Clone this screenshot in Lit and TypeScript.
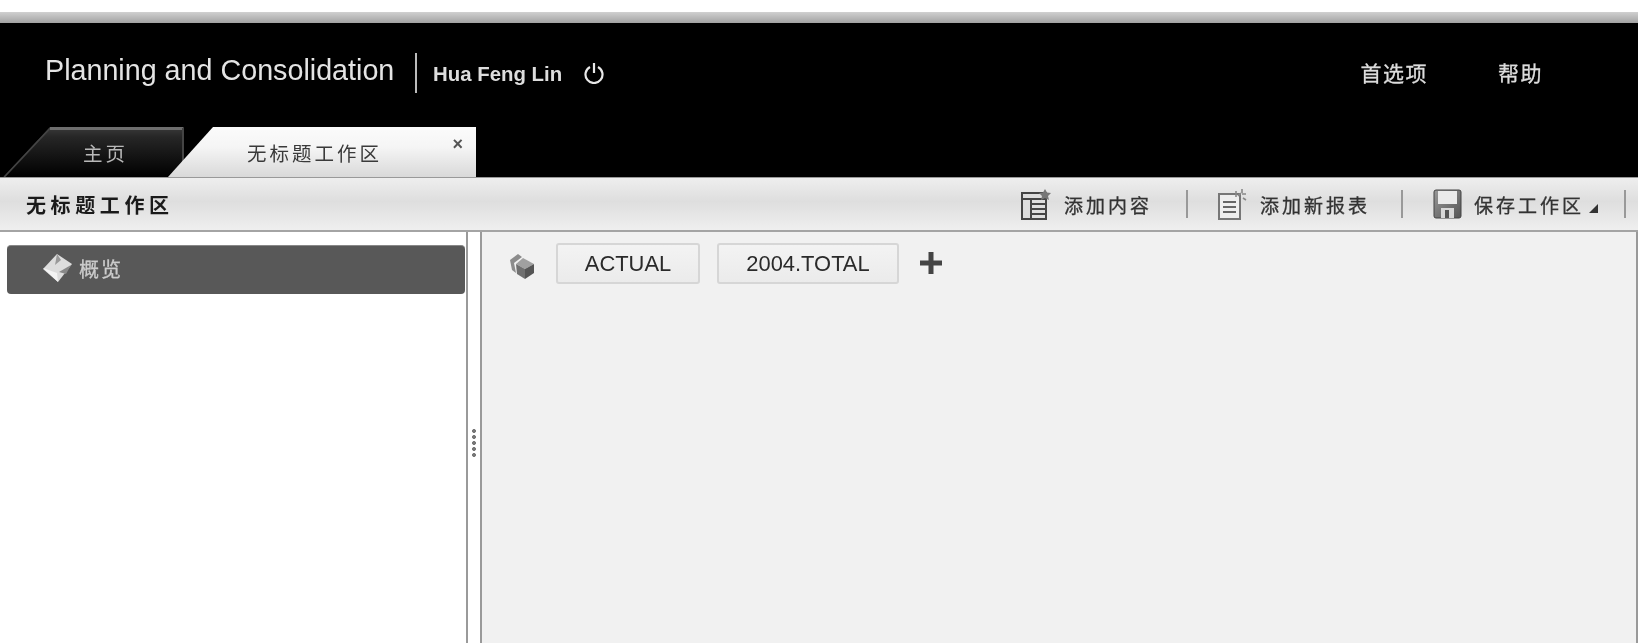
import { LitElement, html, css } from "lit";
import { customElement } from "lit/decorators.js";

@customElement("app-root")
export class AppRoot extends LitElement {
  static styles = css`
    :host {
      display: flex;
      flex-direction: column;
      width: 1638px;
      height: 643px;
      overflow: hidden;
      background: #fff;
      font-family: "Liberation Sans", "Noto Sans CJK SC", sans-serif;
      filter: blur(0.6px);
    }
    .strip { margin-top: 12px; height: 11px; background: linear-gradient(#d0d0d0, #a2a2a2); flex: none; }
    .header { height: 154px; background: #000; flex: none; display: flex; flex-direction: column; color: #eee; }
    .top { height: 104px; flex: none; display: flex; align-items: flex-start; padding: 30px 95px 0 45px; box-sizing: border-box; }
    .title { font-size: 28.7px; line-height: 34px; color: #e4e4e4; width: 370px; white-space: nowrap; }
    .divider { width: 2px; height: 40px; background: #bbb; }
    .user { font-size: 20.4px; font-weight: bold; margin-left: 16px; margin-top: 10px; line-height: 22px; width: 151px; white-space: nowrap; color: #ddd; }
    .power { margin-top: 9px; width: 20px; height: 22px; }
    .links { margin-left: auto; display: flex; gap: 70px; margin-top: 7px; font-size: 21px; line-height: 28px; color: #ddd; letter-spacing: 1.5px; -webkit-text-stroke: 0.3px #ddd; }
    .tabs { display: flex; height: 50px; padding-left: 3px; align-items: flex-end; }
    .tab { height: 50px; display: flex; align-items: center; font-size: 19.5px; box-sizing: border-box; padding-top: 1px; position: relative; }
    .tab.home { width: 181px; color: #b8b8b8; padding-left: 80px; letter-spacing: 3px;
      background: linear-gradient(#3a3a3a, #262626 20%, #000 100%);
      clip-path: polygon(0 100%, 47px 0, 181px 0, 181px 100%); }
    .edge { position: absolute; left: 0; top: 0; }
    .tab.active { width: 308px; margin-left: -16px; color: #3a3a3a; padding-left: 79px; letter-spacing: 3px;
      background: linear-gradient(#fbfbfb, #f5f5f5 40%, #d9d9d9);
      clip-path: polygon(0 100%, 45px 0, 308px 0, 308px 100%); }
    .close { position: absolute; right: 10px; top: 8px; font-size: 18px; line-height: 18px; color: #555; font-weight: bold; }
    .toolbar { height: 55px; flex: none; box-sizing: border-box; border-top: 1px solid #999; border-bottom: 2px solid #a4a4a4;
      background: linear-gradient(#eeeeee, #dedede 45%, #efefef); display: flex; align-items: center; padding: 0 12px 0 26px; color: #222; }
    .ttl { font-weight: bold; font-size: 20px; letter-spacing: 4.6px; color: #1a1a1a; }
    .actions { margin-left: auto; display: flex; align-items: center; font-size: 19px; letter-spacing: 3px; color: #333; -webkit-text-stroke: 0.3px #333; }
    .actions svg { display: block; }
    .sep { width: 2px; height: 28px; background: #999; }
    .ml12 { margin-left: 12px; }
    .a1 { margin-right: 34px; }
    .a2 { margin: 0 31px 0 30px; }
    .a3 { margin-left: 30px; }
    .arrow { width: 0; height: 0; border-left: 9px solid transparent; border-bottom: 9px solid #333; margin: 8px 26px 0 5px; }
    .item { display: flex; align-items: center; }
    .body { flex: 1; display: flex; min-height: 0; }
    .left { width: 468px; flex: none; box-sizing: border-box; border-right: 2px solid #9a9a9a; padding: 13px 1px 0 7px; }
    .row { height: 49px; background: #585858; border-radius: 4px; display: flex; align-items: center; padding: 0 0 4px 35px; color: #ccc; font-size: 20px; letter-spacing: 2px; gap: 6px; border-top: 1px solid #888; box-sizing: border-box; -webkit-text-stroke: 0.3px #ccc; }
    .split { width: 12px; flex: none; background: #fff; display: flex; align-items: center; justify-content: center; }
    .grip { width: 4px; height: 30px; margin-top: 10px; background-image: radial-gradient(circle, #777 1.8px, transparent 2.2px); background-size: 4px 6px; }
    .main { flex: 1; background: #f1f1f1; border-left: 2px solid #9a9a9a; border-right: 2px solid #999; display: flex; align-items: flex-start; padding: 11px 0 0 26px; }
    .cube { margin-top: 9px; margin-right: 20px; }
    .chip { height: 41px; box-sizing: border-box; border: 2px solid #d6d6d6; border-radius: 3px; background: linear-gradient(#f3f3f3, #ebebeb); display: flex; align-items: center; justify-content: center; font-size: 21.9px; color: #2a2a2a; }
    .c1 { width: 144px; margin-right: 17px; }
    .c2 { width: 182px; margin-right: 20px; }
    .plus { margin-top: 8px; }
  `;

  render() {
    return html`
      <div class="strip"></div>
      <div class="header">
        <div class="top">
          <div class="title">Planning and Consolidation</div>
          <div class="divider"></div>
          <div class="user">Hua Feng Lin</div>
          <svg class="power" viewBox="0 0 20 22" fill="none" stroke="#e8e8e8" stroke-width="2.2">
            <path d="M6 5a8.5 8.5 0 1 0 8 0" /><path d="M10 1v10" />
          </svg>
          <div class="links"><span>首选项</span><span>帮助</span></div>
        </div>
        <div class="tabs">
          <div class="tab home">
            <svg class="edge" width="181" height="50" viewBox="0 0 181 50" fill="none">
              <path d="M1 50L47 1" stroke="#444" stroke-width="2" />
              <path d="M47 1.5H180" stroke="#6e6e6e" stroke-width="3" />
              <path d="M180 1V50" stroke="#444" stroke-width="2" />
            </svg>
            <span>主页</span>
          </div>
          <div class="tab active">无标题工作区<span class="close">×</span></div>
        </div>
      </div>
      <div class="toolbar">
        <div class="ttl">无标题工作区</div>
        <div class="actions">
          <div class="item a1">
            <svg width="31" height="32" viewBox="0 0 31 32">
              <rect x="1" y="5" width="24" height="26" fill="#ddd" stroke="#444" stroke-width="2" />
              <path d="M1 11h24M10 11v20M10 16h15M10 21h15M10 26h15" stroke="#444" stroke-width="2" />
              <path d="M24 1l2 3.5 4 .5-3 3 1 4-4-2-4 2 1-4-3-3 4-.5z" fill="#777" />
            </svg>
            <span class="ml12">添加内容</span>
          </div>
          <div class="sep"></div>
          <div class="item a2">
            <svg width="30" height="32" viewBox="0 0 30 32">
              <rect x="1" y="6" width="21" height="25" fill="#eee" stroke="#777" stroke-width="2" />
              <path d="M5 14h13M5 19h13M5 24h13" stroke="#666" stroke-width="2" />
              <path d="M18 3v6M24 1v4M28 6h-4M25 10l3 2M20 8l3-3" stroke="#888" stroke-width="1.6" />
            </svg>
            <span class="ml12">添加新报表</span>
          </div>
          <div class="sep"></div>
          <div class="item a3">
            <svg width="29" height="30" viewBox="0 0 29 30">
              <defs><linearGradient id="fl" x1="0" y1="0" x2="1" y2="1"><stop offset="0" stop-color="#999"/><stop offset="1" stop-color="#555"/></linearGradient></defs>
              <rect x="1" y="1" width="27" height="28" rx="2" fill="url(#fl)" stroke="#444" />
              <rect x="5" y="2" width="19" height="13" fill="#eaeaea" />
              <rect x="8" y="19" width="13" height="10" fill="#d8d8d8" />
              <rect x="12" y="21" width="4" height="8" fill="#555" />
            </svg>
            <span class="ml12">保存工作区</span>
            <span class="arrow"></span>
          </div>
          <div class="sep"></div>
        </div>
      </div>
      <div class="body">
        <div class="left">
          <div class="row">
            <svg width="31" height="30" viewBox="0 0 31 30">
              <path d="M15 1l15 10-14 18L1 16z" fill="#ddd" />
              <path d="M1 15l14 5 1 9z" fill="#f4f4f4" />
              <path d="M15 1l4 6-6 5z" fill="#999" />
              <path d="M17 19l12-7-5 9z" fill="#888" />
            </svg>
            <span>概览</span>
          </div>
        </div>
        <div class="split"><div class="grip"></div></div>
        <div class="main">
          <svg class="cube" width="28" height="28" viewBox="0 0 28 28">
            <path d="M2 8l8-6 4 3-8 6 2 10-4-3z" fill="#8c8c8c" />
            <path d="M8 12l7-6 11 6-9 5z" fill="#a0a0a0" />
            <path d="M8 12l9 5v10l-8-5z" fill="#707070" />
            <path d="M17 17l9-5v9l-9 6z" fill="#555" />
          </svg>
          <div class="chip c1">ACTUAL</div>
          <div class="chip c2">2004.TOTAL</div>
          <svg class="plus" width="24" height="24" viewBox="0 0 24 24">
            <path d="M12 1v22M1 12h22" stroke="#444" stroke-width="5" />
          </svg>
        </div>
      </div>
    `;
  }
}
